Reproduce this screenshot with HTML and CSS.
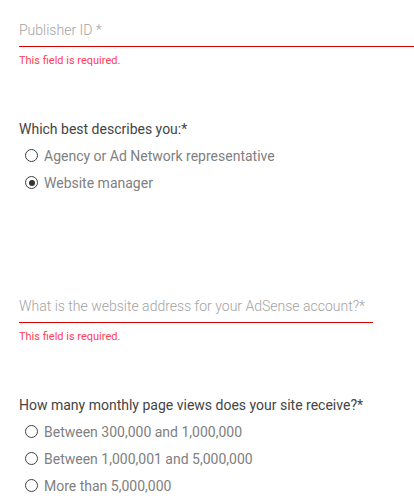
FILE: index.html
```html
<!DOCTYPE html>
<html>
  <head>
    <meta http-equiv="Content-Type" content="text/html; charset=utf-8"/>
    <link rel="stylesheet" href="styles.css">
  </head>
  <body>
    <form class="signup">
      <div class="field field-wide">
        <input type="text" class="text-input" placeholder="Publisher ID *" />
        <div class="error">This field is required.</div>
      </div>

      <div class="question">
        <div class="question-label">Which best describes you:*</div>
        <label class="option">
          <input type="radio" name="role" value="agency" />
          <span>Agency or Ad Network representative</span>
        </label>
        <label class="option">
          <input type="radio" name="role" value="website" checked />
          <span>Website manager</span>
        </label>
      </div>

      <div class="field field-narrow">
        <input type="text" class="text-input" placeholder="What is the website address for your AdSense account?*" />
        <div class="error">This field is required.</div>
      </div>

      <div class="question">
        <div class="question-label">How many monthly page views does your site receive?*</div>
        <label class="option">
          <input type="radio" name="views" value="1" />
          <span>Between 300,000 and 1,000,000</span>
        </label>
        <label class="option">
          <input type="radio" name="views" value="2" />
          <span>Between 1,000,001 and 5,000,000</span>
        </label>
        <label class="option">
          <input type="radio" name="views" value="3" />
          <span>More than 5,000,000</span>
        </label>
      </div>
    </form>
  </body>
</html>
```

FILE: styles.css
```css
body {
  margin: 0px;
  padding: 0px;
  background: white;
  font-family: Roboto, "Liberation Sans", sans-serif;
  overflow: hidden;
}

.signup {
  padding: 0px 0px 0px 19px;
  margin: 0px;
}

.field-wide {
  width: 395px;
  padding-top: 20px;
}

.field-narrow {
  width: 354px;
  margin-top: 100px;
}

.text-input {
  display: block;
  box-sizing: border-box;
  width: 100%;
  height: 27px;
  margin: 0px;
  padding: 0px 0px 6px 0px;
  border: none;
  border-bottom: 1px solid #d50000;
  outline: none;
  font-family: inherit;
  font-size: 14px;
  font-weight: 300;
  line-height: 20px;
  color: #333333;
  background: transparent;
}

.text-input::placeholder {
  color: #a3a3a3;
  opacity: 1;
}

.error {
  margin-top: 7px;
  font-size: 11px;
  line-height: 14px;
  color: #ff4057;
}

.question {
  margin-top: 51px;
}

.question-label {
  font-size: 14px;
  line-height: 20px;
  color: #444444;
  margin-bottom: 3px;
}

.option {
  display: flex;
  align-items: center;
  height: 27px;
  padding-left: 6px;
  font-size: 14px;
  color: #808080;
}

.option input {
  appearance: none;
  -webkit-appearance: none;
  box-sizing: border-box;
  width: 13px;
  height: 13px;
  margin: 0px 6px 0px 0px;
  border: 1.5px solid #404040;
  border-radius: 50%;
  display: grid;
  place-items: center;
}

.option input:checked::after {
  content: "";
  width: 6px;
  height: 6px;
  border-radius: 50%;
  background: #333333;
}
```
